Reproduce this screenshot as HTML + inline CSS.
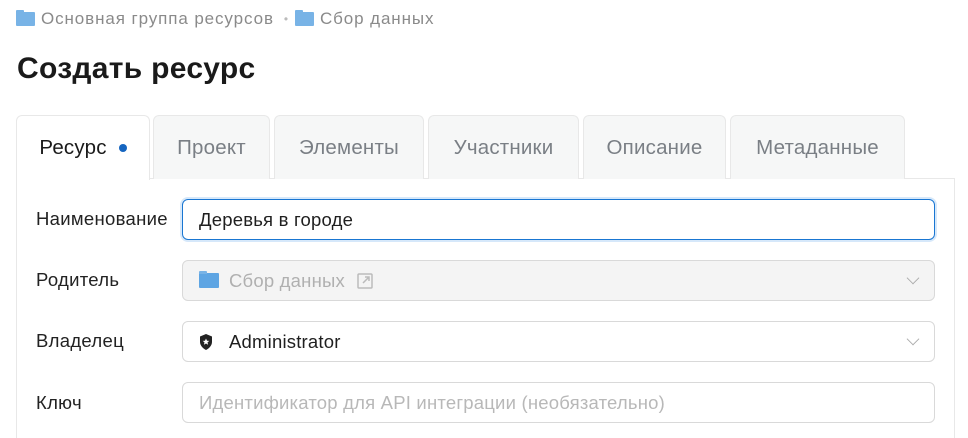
<!DOCTYPE html>
<html style="width:968px;height:438px;overflow:hidden"><head><meta charset="utf-8"><style>
*{box-sizing:border-box;margin:0;padding:0}
body{width:968px;height:438px;overflow:hidden;background:#fff;font-family:"Liberation Sans",sans-serif;color:#1f1f1f;position:relative}
.bc{position:absolute;top:9px;left:16px;font-size:17px;letter-spacing:0.9px;color:#8a8a8a;display:flex;align-items:center;white-space:nowrap}
.fold{display:inline-block;width:19px;height:14px;background:#78b3e6;border-radius:1px;margin-right:6px;position:relative}
.fold:before{content:"";position:absolute;left:0;top:-2px;width:8px;height:3px;background:#78b3e6;border-radius:1px 1px 0 0}
h1{position:absolute;top:52px;left:17px;font-size:30px;letter-spacing:0.3px;font-weight:bold;color:#1a1a1a}
.tab{position:absolute;top:115px;height:64px;border:1px solid #e8e8e8;border-bottom:none;border-radius:6px 6px 0 0;background:#f6f7f7;font-size:20.5px;letter-spacing:0.2px;color:#7a7f85;display:flex;align-items:center;justify-content:center}
.tab.a{background:#fff;color:#1a1a1a;height:65px;z-index:2}
.panel{position:absolute;top:178px;left:16px;width:939px;height:270px;border:1px solid #e8e8e8}
.lab{position:absolute;left:36px;font-size:18.5px;letter-spacing:0.3px;color:#222}
.in{position:absolute;left:182px;width:753px;height:41px;border:1px solid #d9d9d9;border-radius:6px;font-size:18.5px;letter-spacing:0.2px;display:flex;align-items:center;padding-left:16px}
.chev{position:absolute;right:16px;top:12px;width:10px;height:10px;border-right:1.5px solid #aaa;border-bottom:1.5px solid #aaa;transform:rotate(45deg) scale(.9)}
</style></head><body>
<div class="bc"><span class="fold"></span>Основная группа ресурсов<span style="margin:0 6px 0 10px;font-size:12px;color:#bbb">•</span><span class="fold"></span>Сбор данных</div>
<h1>Создать ресурс</h1>
<div class="panel"></div>
<div class="tab a" style="left:16px;width:134px">Ресурс<span style="display:inline-block;width:8px;height:8px;border-radius:50%;background:#1565c0;margin-left:12px"></span></div>
<div class="tab" style="left:153px;width:117px">Проект</div>
<div class="tab" style="left:274px;width:150px">Элементы</div>
<div class="tab" style="left:428px;width:151px">Участники</div>
<div class="tab" style="left:583px;width:143px">Описание</div>
<div class="tab" style="left:730px;width:175px">Метаданные</div>
<div class="lab" style="top:208px">Наименование</div>
<div class="in" style="top:199px;border-color:#1976d2;box-shadow:0 0 0 2px #d6e8fa">Деревья в городе</div>
<div class="lab" style="top:269px">Родитель</div>
<div class="in" style="top:260px;background:#f4f4f4;color:#b0b0b0"><span class="fold" style="background:#5ea5e3;width:20px;height:15px;margin-right:10px"></span>Сбор данных<svg width="16" height="16" viewBox="0 0 16 16" style="margin-left:12px"><rect x="1" y="1" width="14" height="14" rx="1" fill="none" stroke="#bbb" stroke-width="1.5"/><path d="M6 10L12 4M8 4h4v4" fill="none" stroke="#bbb" stroke-width="1.5"/></svg><span class="chev"></span></div>
<div class="lab" style="top:330px">Владелец</div>
<div class="in" style="top:321px"><svg width="14" height="16" viewBox="0 0 14 16" style="margin-right:16px"><path d="M7 0L13 2.5V8c0 3.5-3 6.5-6 8C4 14.5 1 11.5 1 8V2.5Z" fill="#222"/><path d="M7 4.5l1 2.2 2.3.2-1.8 1.5.6 2.3L7 9.5 4.9 10.7l.6-2.3L3.7 6.9 6 6.7Z" fill="#fff"/></svg>Administrator<span class="chev"></span></div>
<div class="lab" style="top:392px">Ключ</div>
<div class="in" style="top:382px;color:#b8b8b8">Идентификатор для API интеграции (необязательно)</div>
</body></html>
